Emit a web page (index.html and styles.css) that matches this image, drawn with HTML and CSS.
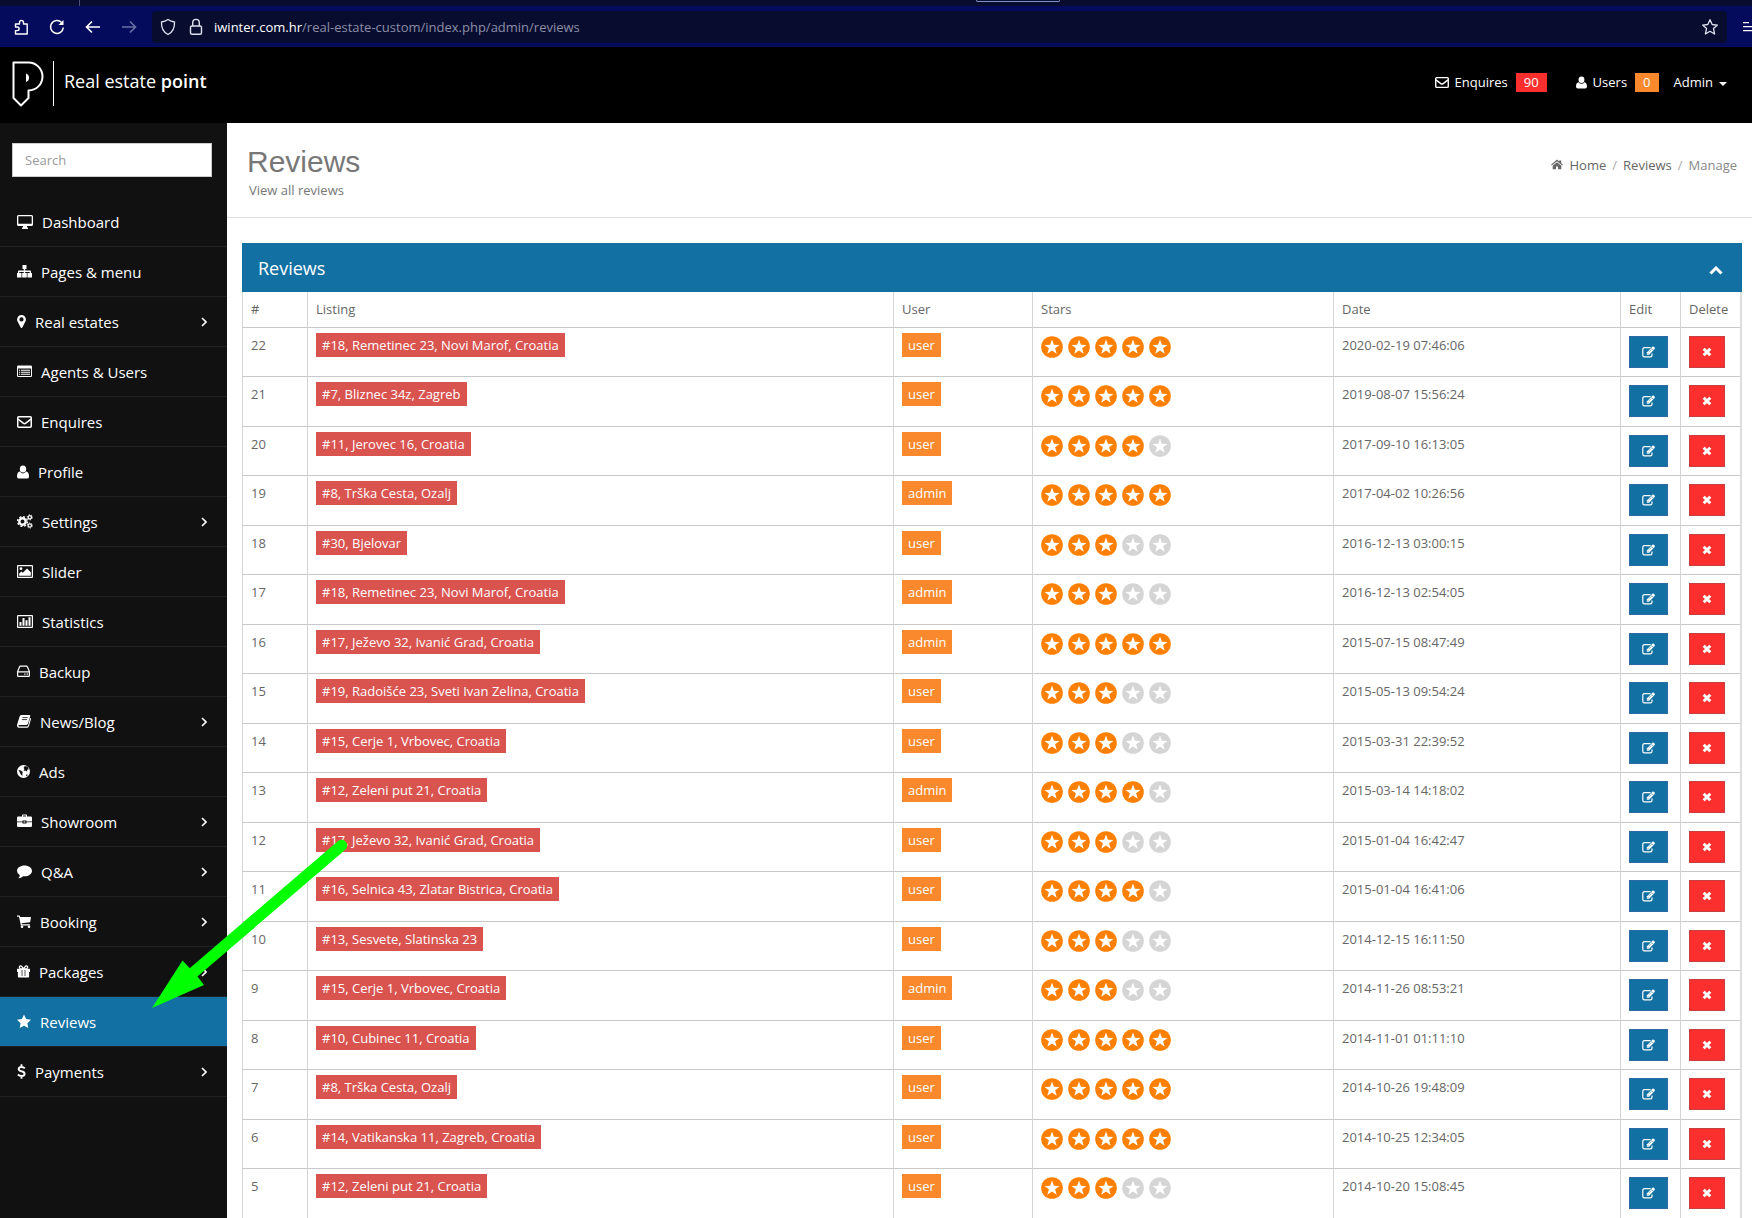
FILE: index.html
```
<!DOCTYPE html>
<html lang="en">
<head>
    <meta charset="UTF-8">
    <meta name="viewport" content="width=device-width, initial-scale=1.0">
    <title>Reviews - Real estate point</title>
    <link rel="stylesheet" href="styles.css">
</head>
<body>
    <!-- shared icons -->
    <svg class="sprite" aria-hidden="true">
        <symbol id="i-envelope" viewBox="0 0 15 14">
            <rect x="0.75" y="1.75" width="13.5" height="10.5" rx="1" fill="none" stroke="currentColor" stroke-width="1.5"/>
            <path d="M1 4.2l5.2 4q1.3 1 2.6 0l5.2-4" fill="none" stroke="currentColor" stroke-width="1.5"/>
        </symbol>
        <symbol id="i-user" viewBox="0 0 12 14">
            <ellipse cx="6" cy="4" rx="3.2" ry="3.6"/>
            <path d="M2.8 6.6Q0 7.2 0 11.4 0 13.6 2 13.6h8q2 0 2-2.2 0-4.2-2.8-4.8Q8 8.4 6 8.4T2.8 6.6z"/>
        </symbol>
        <symbol id="i-right" viewBox="0 0 6 10">
            <path d="M1 1l4 4-4 4" fill="none" stroke="currentColor" stroke-width="1.6"/>
        </symbol>
        <symbol id="i-star" viewBox="0 0 22 22">
            <circle cx="11" cy="11" r="10.8"/>
            <path d="M11 3.4l1.9 5.3 5.6.2-4.4 3.4 1.6 5.4-4.7-3.2-4.7 3.2 1.6-5.4-4.4-3.4 5.6-.2z" fill="#fff"/>
        </symbol>
        <symbol id="i-edit" viewBox="0 0 13 12">
            <path d="M8.6 1.7H2.4Q.8 1.7.8 3.3v6q0 1.6 1.6 1.6h6q1.6 0 1.6-1.6V7.4" fill="none" stroke="currentColor" stroke-width="1.2"/>
            <path d="M4.8 8.7V6.4L10.4.8q.7-.6 1.4 0l.8.8q.6.7 0 1.4L7.1 8.7z"/>
            <path d="M5.6 7.1l.8.8M9.5 2.3L11.2 4M7 5.7l2.3-2.3" stroke="#1270a2" stroke-width=".6"/>
        </symbol>
        <symbol id="i-remove" viewBox="0 0 10 10">
            <path d="M1.7 1.7l6.6 6.6M8.3 1.7L1.7 8.3" stroke="currentColor" stroke-width="3"/>
        </symbol>
    </svg>

    <div class="browser">
        <div class="tabs">
            <span class="tab-line"></span>
            <span class="tab"></span>
        </div>
        <div class="toolbar">
            <button class="tool" aria-label="Extensions">
                <svg width="16" height="16" viewBox="0 0 16 16" fill="none" stroke="currentColor" stroke-width="1.4" stroke-linejoin="round"><path d="M2.5 15h11.7V5H10.500V3.500a2 2 0 0 0-4 0V5H2.500v3h1.800a1.800 1.800 0 0 1 0 3.600H2.500z"/></svg>
            </button>
            <button class="tool" aria-label="Reload">
                <svg width="16" height="16" viewBox="0 0 16 16" fill="none" stroke="currentColor" stroke-width="1.5"><path d="M14.3 8.5A6.400 6.400 0 1 1 12.600 3.600"/><path d="M14.500 1v5H9.500z" fill="currentColor" stroke="none"/></svg>
            </button>
            <button class="tool" aria-label="Back">
                <svg width="16" height="16" viewBox="0 0 16 16" fill="none" stroke="currentColor" stroke-width="1.6"><path d="M15 8H2M7 2.500L1.500 8 7 13.500"/></svg>
            </button>
            <button class="tool tool-off" aria-label="Forward">
                <svg width="16" height="16" viewBox="0 0 16 16" fill="none" stroke="currentColor" stroke-width="1.6"><path d="M1 8h13M9 2.500L14.500 8 9 13.500"/></svg>
            </button>
            <div class="address">
                <svg width="16" height="18" viewBox="0 0 16 18" fill="none" stroke="currentColor" stroke-width="1.3"><path d="M8 1.500Q5 3.600 1.500 4 1 13 8 16.500 15 13 14.500 4 11 3.600 8 1.500z"/></svg>
                <svg width="14" height="18" viewBox="0 0 14 18" fill="none" stroke="currentColor" stroke-width="1.4"><rect x="1.500" y="8" width="11" height="8.300" rx="1.500"/><path d="M3.700 8V4.700a3.300 3.300 0 0 1 6.600 0V8"/></svg>
                <p class="url"><span class="host">iwinter.com.hr</span>/real-estate-custom/index.php/admin/reviews</p>
                <button class="tool" aria-label="Bookmark">
                    <svg width="18" height="18" viewBox="0 0 18 18" fill="none" stroke="currentColor" stroke-width="1.3" stroke-linejoin="round"><path d="M9 1.700l2.200 4.800 5.200.6-3.900 3.500 1.100 5.400L9 13.300 4.400 16l1.100-5.400L1.600 7.100l5.200-.6z"/></svg>
                </button>
            </div>
            <button class="tool menu" aria-label="Menu">
                <svg width="16" height="12" viewBox="0 0 16 12" stroke="currentColor" stroke-width="1.3"><path d="M0 1.700h6M0 5.700h16M0 9.700h16"/></svg>
            </button>
        </div>
    </div>

    <header class="header">
        <a href="#" class="brand">
            <svg class="logo" width="32" height="46" viewBox="0 0 32 46" fill="none" stroke="#fff" stroke-width="2" stroke-linejoin="round"><path d="M1.500 1.500H16.500A13.800 13.800 0 0 1 16.500 29.500V37L9 44.500 1.500 37z"/><path d="M14 12.500v8.500A4.500 4.500 0 0 0 14 12.500z" fill="#fff" stroke="none"/></svg>
            <span class="brand-text">Real estate <strong>point</strong></span>
        </a>
        <nav class="top-nav">
            <a href="#"><svg width="14" height="13"><use href="#i-envelope"/></svg> Enquires <span class="badge red">90</span></a>
            <a href="#" class="top-users"><svg width="11" height="13"><use href="#i-user"/></svg> Users <span class="badge orange">0</span></a>
            <a href="#" class="top-admin">Admin <span class="caret"></span></a>
        </nav>
    </header>

    <div class="page">
        <aside class="sidebar">
            <form class="search">
                <input type="text" placeholder="Search" aria-label="Search">
            </form>
            <ul class="menu-list">
                <li><a href="#"><svg width="16" height="15" viewBox="0 -1 16 15"><path d="M1.500 0h13Q16 0 16 1.500v8q0 1.500-1.500 1.500H10v1.500h1V14H5v-1.500h1V11H1.500Q0 11 0 9.500v-8Q0 0 1.500 0zM1.300 1.300v7.400h13.400V1.300z" fill-rule="evenodd"/></svg>Dashboard</a></li>
                <li><a href="#"><svg width="15" height="15"><path d="M5.500 1h4v4H8.200v1.600h4.900q.9 0 .9.900V9H15v4.500h-4.500V9h2.200V7.900H8.200V9h1.600v4.500H5.200V9h1.600V7.900H2.300V9h2.200v4.500H0V9h1V7.500q0-.9.900-.9h4.900V5H5.500z"/></svg>Pages &amp; menu</a></li>
                <li><a href="#"><svg width="9" height="15"><path d="M4.500 1A4.400 4.400 0 0 1 8.900 5.400Q8.900 6.600 8.400 7.500L5.300 13.400q-.8 1-1.600 0L.6 7.500Q.1 6.600.1 5.400A4.400 4.400 0 0 1 4.500 1zm0 2.300a2.100 2.100 0 1 0 0 4.200 2.100 2.100 0 0 0 0-4.200z" fill-rule="evenodd"/></svg>Real estates<svg class="arrow" width="6" height="10"><use href="#i-right"/></svg></a></li>
                <li><a href="#"><svg width="15" height="15"><path d="M1.200 1.500h12.600q1.200 0 1.200 1.200v9.100q0 1.200-1.200 1.200H1.200Q0 13 0 11.800V2.700Q0 1.500 1.200 1.500zM1 4.500v7.400h13V4.500z" fill-rule="evenodd"/><path d="M2 6.300h1.200M4 6.300h9M2 8.300h1.200M4 8.300h9M2 10.300h1.200M4 10.300h9" stroke="currentColor" stroke-width="1.1"/></svg>Agents &amp; Users</a></li>
                <li><a href="#"><svg width="15" height="14"><use href="#i-envelope"/></svg>Enquires</a></li>
                <li><a href="#"><svg width="12" height="14"><use href="#i-user"/></svg>Profile</a></li>
                <li><a href="#"><svg width="16" height="15" fill="none" stroke="currentColor"><circle cx="5.500" cy="7.500" r="3.200" stroke-width="2.400"/><circle cx="5.500" cy="7.500" r="4.900" stroke-width="1.400" stroke-dasharray="2 1.850"/><circle cx="12.800" cy="3.300" r="1.700" stroke-width="1.300"/><circle cx="12.800" cy="3.300" r="2.600" stroke-width=".9" stroke-dasharray="1.200 1.520"/><circle cx="12.800" cy="11.500" r="1.700" stroke-width="1.300"/><circle cx="12.800" cy="11.500" r="2.600" stroke-width=".9" stroke-dasharray="1.200 1.520"/></svg>Settings<svg class="arrow" width="6" height="10"><use href="#i-right"/></svg></a></li>
                <li><a href="#"><svg width="16" height="15"><path d="M1 1h14q1 0 1 1v11q0 1-1 1H1q-1 0-1-1V2q0-1 1-1zm.2 1.200v10.600h13.600V2.200z" fill-rule="evenodd"/><circle cx="4" cy="4.700" r="1.400"/><path d="M2.200 11.800V9.600l2.200-2.200 1.400 1.400L10 4.600l3.800 3.600v3.600z"/></svg>Slider</a></li>
                <li><a href="#"><svg width="16" height="15"><path d="M1 1h14q1 0 1 1v11q0 1-1 1H1q-1 0-1-1V2q0-1 1-1zm.2 1.200v10.600h13.600V2.200z" fill-rule="evenodd"/><path d="M2.500 8h2v3.800h-2zM5.500 4h2v7.800h-2zM8.500 6.300h2v5.500h-2zM11.500 3.300h2v8.500h-2z"/></svg>Statistics</a></li>
                <li><a href="#"><svg width="13" height="15" fill="none" stroke="currentColor" stroke-width="1.2"><path d="M.6 7.600L2.500 3q.3-.8 1.100-.8h5.800q.8 0 1.100.8l1.900 4.600v3.900q0 .9-.9.900H1.500q-.9 0-.9-.9zM.6 7.800h11.800"/><path d="M7.200 10.100h1.300M9.700 10.100H11"/></svg>Backup</a></li>
                <li><a href="#"><svg width="14" height="15"><path d="M4.500 1h7.800q1.200 0 .9 1.200L11 9.600q-.4 1.400-1.600 1.400H2.200q-.9 0-.9.600 0 .8.900.8h7.900q.7 0 1-.9l2.100-7.600q1.100.4.700 1.600l-2 6.700q-.5 1.500-2 1.500H2Q.1 13.700 0 11.800q-.1-.8.300-1.700L2.700 2.300Q3.200 1 4.500 1z"/><path d="M5.400 3.600h5.300M4.800 5.600h5.300" stroke="#111" stroke-width=".8"/></svg>News/Blog<svg class="arrow" width="6" height="10"><use href="#i-right"/></svg></a></li>
                <li><a href="#"><svg width="13" height="15"><circle cx="6.500" cy="7.500" r="6.500"/><path d="M7.500 2.200l3 .3 1.300 2.800-1.300.3-.8 1.900-1.500-1-1.700.4.900-1.900-.8-1.100zM1.500 6l2.300.4 2 1.500-.5 1.300.3 2.600L4 10.700 3 8.700zM9 10.500l2 .2-1.700 1.800z" fill="#111"/></svg>Ads</a></li>
                <li><a href="#"><svg width="15" height="15"><path d="M5 2.500V1.300Q5 .5 5.800.5h3.400q.8 0 .8.800v1.200h3.800Q15 2.500 15 3.700V7.500H9.500V6.600h-4v.9H0V3.700Q0 2.500 1.200 2.500zm1.100 0h2.800v-.9H6.100zM0 8.300h5.500v1.200h4V8.300H15v3.500q0 1.200-1.200 1.200H1.200Q0 13 0 11.800zM6.600 7.400h1.800v1.200H6.600z"/></svg>Showroom<svg class="arrow" width="6" height="10"><use href="#i-right"/></svg></a></li>
                <li><a href="#"><svg width="15" height="15"><path d="M7.500 1.500C11.600 1.500 15 3.900 15 6.900s-3.400 5.400-7.500 5.400l-1.300-.1Q4.200 14 1.200 14.200q1.500-1.200 1.600-3Q0 9.500 0 6.900C0 3.900 3.400 1.500 7.500 1.500z"/></svg>Q&amp;A<svg class="arrow" width="6" height="10"><use href="#i-right"/></svg></a></li>
                <li><a href="#"><svg width="14" height="15"><path d="M0 1.500h2.600l.6 1.500H14l-.9 5.300-8.500 1 .3 1h8v1.200H3.900L2 2.700H0z"/><circle cx="5" cy="12.700" r="1.300"/><circle cx="12" cy="12.700" r="1.300"/></svg>Booking<svg class="arrow" width="6" height="10"><use href="#i-right"/></svg></a></li>
                <li><a href="#"><svg width="13" height="15"><path d="M0 4.800h13v3.300H0zM.9 8.100h11.200v4.600q0 .8-.8.800H1.700q-.8 0-.8-.8z"/><path d="M6.500 4.800L4.900 2.600Q4 1.500 3 2.100q-1.300 1 0 2.300.5.400 3.500.4l1.600-2.200q.9-1.100 1.900-.5 1.300 1 0 2.300-.5.400-3.500.4" fill="none" stroke="currentColor" stroke-width="1.3"/><path d="M5 6v6M8 6v6" stroke="#111" stroke-width=".7"/></svg>Packages<svg class="arrow" width="6" height="10"><use href="#i-right"/></svg></a></li>
                <li class="active"><a href="#"><svg width="14" height="15"><path d="M7 .6l2.100 4.500 4.900.7-3.600 3.400.9 4.900L7 11.700l-4.300 2.400.9-4.900L0 5.800l4.900-.7z"/></svg>Reviews</a></li>
                <li><a href="#"><svg width="9" height="15" fill="none" stroke="currentColor" stroke-width="1.9"><path d="M7.800 4.300Q6.500 3 4.500 3 1.700 3 1.700 5q0 1.500 2.800 2.300Q7.600 8 7.600 9.900q0 2.100-3.100 2.100Q2.400 12 .9 10.500M4.500.3V3M4.500 12v2.700"/></svg>Payments<svg class="arrow" width="6" height="10"><use href="#i-right"/></svg></a></li>
            </ul>
        </aside>

        <main class="main">
            <div class="page-head">
                <div>
                    <h1>Reviews</h1>
                    <p>View all reviews</p>
                </div>
                <nav class="breadcrumb">
                    <a href="#"><svg width="12" height="11" viewBox="0 0 13 12"><path d="M6.500.6L8.900 2.700V1.500h2.200v3L13 6.200l-.8 1L6.500 2.500.8 7.200 0 6.200zM6.500 3.500l4.700 3.800v3.900H7.600V8.200H5.400v3H1.800V7.300z"/></svg>Home</a>
                    <span class="sep">/</span>
                    <a href="#">Reviews</a>
                    <span class="sep">/</span>
                    <span class="current">Manage</span>
                </nav>
            </div>

            <section class="panel">
                <div class="panel-head">
                    <h2>Reviews</h2>
                    <button class="collapse" aria-label="Collapse">
                        <svg width="14" height="9" viewBox="0 0 14 9"><path d="M1.500 7.500L7 2l5.500 5.500" fill="none" stroke="currentColor" stroke-width="3"/></svg>
                    </button>
                </div>
                <table class="reviews">
                    <thead>
                        <tr>
                            <th class="col-id">#</th>
                            <th>Listing</th>
                            <th class="col-user">User</th>
                            <th class="col-stars">Stars</th>
                            <th class="col-date">Date</th>
                            <th class="col-edit">Edit</th>
                            <th class="col-delete">Delete</th>
                        </tr>
                    </thead>
                    <tbody id="reviewRows"></tbody>
                </table>
            </section>
        </main>
    </div>

    <!-- pointer to the Reviews menu item -->
    <svg class="pointer" width="200" height="172" viewBox="0 0 200 172" fill="none" aria-hidden="true">
        <path d="M42 134L189.500 7.500" stroke="#0f0" stroke-width="11.500" stroke-linecap="round"/>
        <path d="M0 170L30.500 122.500 38 130.500 45.500 138.500 52 147z" fill="#0f0"/>
    </svg>

    <script src="script.js"></script>
</body>
</html>
```

FILE: styles.css
```
* {
    margin: 0;
    padding: 0;
    box-sizing: border-box;
}

body {
    font-family: 'Open Sans', 'Noto Sans', sans-serif;
    font-size: 13px;
    line-height: 18px;
    color: #666;
    background-color: #fff;
    display: flex;
    flex-direction: column;
    min-height: 100vh;
    overflow-x: hidden;
}

a {
    color: inherit;
    text-decoration: none;
}

button {
    border: none;
    background: none;
    color: inherit;
    cursor: pointer;
}

svg {
    flex-shrink: 0;
}

svg:not([fill]) {
    fill: currentColor;
}

.sprite {
    display: none;
}

/* Browser bar */
.tabs {
    display: flex;
    height: 6px;
    background-color: #080d30;
}

.tab-line {
    width: 1px;
    margin-left: 79px;
    background-color: #4a4e78;
}

.tab {
    width: 84px;
    height: 2px;
    margin-left: 896px;
    border: 1px solid #7f95c8;
    border-top: none;
    border-radius: 0 0 3px 3px;
}

.toolbar {
    display: flex;
    align-items: center;
    height: 41px;
    padding-left: 13px;
    background-color: #040b5c;
    color: #fff;
    overflow: hidden;
}

.tool {
    display: flex;
    margin-right: 20px;
}

.tool-off {
    margin-right: 15px;
    color: #6b70a5;
}

.address {
    flex: 1;
    display: flex;
    align-items: center;
    height: 32px;
    padding: 0 8px;
    border-radius: 4px;
    background-color: #080d30;
    color: #dfe1f0;
}

.address svg + svg {
    margin-left: 13px;
}

.address .tool {
    margin-right: 0;
}

.url {
    flex: 1;
    margin-left: 11px;
    color: #8b8ea6;
}

.host {
    color: #fff;
}

.menu {
    margin-right: -7px;
    margin-left: 16px;
}

/* Header */
.header {
    display: flex;
    justify-content: space-between;
    align-items: center;
    height: 76px;
    padding: 0 25px 3px 12px;
    background-color: #000;
    color: #fff;
}

.brand {
    display: flex;
    align-items: center;
}

.brand-text {
    margin-left: 9px;
    padding: 0 0 4px 10px;
    border-left: 1px solid #fff;
    font-size: 18px;
    line-height: 41px;
}

.brand-text strong {
    font-weight: 600;
}

.top-nav,
.top-nav a {
    display: flex;
    align-items: center;
}

.top-nav {
    padding-bottom: 3px;
}

.top-nav svg {
    margin-right: 6px;
}

.badge {
    margin-left: 8px;
    padding: 0 8px;
    line-height: 19px;
}

.red {
    background-color: #fc2f2f;
}

.orange {
    background-color: #f9892c;
}

.top-users {
    margin-left: 29px;
}

.top-admin {
    margin-left: 15px;
}

.caret {
    margin: 3px 0 0 6px;
    border: 4px solid transparent;
    border-top-color: #fff;
    border-bottom: none;
}

/* Sidebar */
.page {
    flex: 1;
    display: flex;
}

.sidebar {
    width: 227px;
    flex-shrink: 0;
    padding-top: 20px;
    background-color: #111;
    color: #fff;
}

.search {
    padding: 0 15px 20px 12px;
}

.search input {
    width: 100%;
    height: 34px;
    padding: 0 12px;
    border: 1px solid #ccc;
    font-family: inherit;
    font-size: 13px;
}

.search input::placeholder {
    color: #999;
}

.menu-list {
    list-style: none;
}

.menu-list li {
    border-bottom: 1px solid #222;
}

.menu-list a {
    display: flex;
    align-items: center;
    gap: 9px;
    height: 49px;
    padding: 0 20px 0 17px;
    font-size: 15px;
}

.menu-list .active {
    background-color: #1270a2;
}

.menu-list .arrow {
    margin-left: auto;
}

/* Content */
.main {
    flex: 1;
    min-width: 0;
}

.page-head {
    display: flex;
    justify-content: space-between;
    align-items: flex-start;
    height: 95px;
    padding: 21px 15px 0 20px;
    border-bottom: 1px solid #ddd;
}

.page-head h1 {
    font-family: 'Liberation Sans', Arial, sans-serif;
    font-size: 30px;
    font-weight: normal;
    line-height: 36px;
    color: #777;
}

.page-head p {
    margin-top: 1px;
    padding-left: 2px;
    color: #777;
}

.breadcrumb {
    display: flex;
    align-items: center;
    gap: 6px;
    margin-top: 12px;
}

.breadcrumb svg {
    margin-right: 7px;
}

.sep {
    color: #aaa;
}

.current {
    color: #888;
}

.panel {
    margin: 25px 10px 0 15px;
}

.panel-head {
    display: flex;
    justify-content: space-between;
    align-items: center;
    height: 49px;
    padding: 0 19px 0 16px;
    background-color: #1270a2;
    color: #fff;
}

.panel-head h2 {
    font-size: 18px;
    font-weight: normal;
}

.collapse {
    display: flex;
    margin-top: 5px;
}

.reviews {
    width: 100%;
    table-layout: fixed;
    border-collapse: separate;
    border-spacing: 0;
    border-right: 2px solid #ddd;
}

.reviews th,
.reviews td {
    padding: 8px;
    border-left: 1px solid #d5d5d5;
    border-bottom: 1px solid #c9c9c9;
    font-weight: normal;
    text-align: left;
    vertical-align: top;
}

.reviews thead tr {
    height: 36px;
}

.reviews tbody tr {
    height: 49px;
}

.reviews tbody tr:nth-child(even) {
    height: 50px;
}

.reviews tbody tr:last-child td {
    border-bottom: none;
}

.col-id {
    width: 65px;
}

.col-user {
    width: 139px;
}

.col-stars {
    width: 301px;
}

.col-date {
    width: 287px;
}

.col-edit,
.col-delete {
    width: 60px;
}

.label {
    padding: 3px 6px;
    color: #fff;
}

.label.listing {
    background-color: #d9534f;
}

.stars {
    display: flex;
    gap: 5px;
    color: #d5d5d5;
}

.stars .on {
    color: #ff7f00;
}

.btn {
    display: flex;
    justify-content: center;
    align-items: center;
    height: 32px;
    color: #fff;
}

.btn-edit {
    width: 39px;
    background-color: #1270a2;
    border: 1px solid #2a6ba5;
}

.btn-delete {
    width: 36px;
    background-color: #fc2f2f;
    border: 1px solid #c64040;
}

.pointer {
    position: absolute;
    left: 152px;
    top: 838px;
    pointer-events: none;
}
```

FILE: script.js
```
const reviews = [
    [22, '#18, Remetinec 23, Novi Marof, Croatia', 'user', 5, '2020-02-19 07:46:06'],
    [21, '#7, Bliznec 34z, Zagreb', 'user', 5, '2019-08-07 15:56:24'],
    [20, '#11, Jerovec 16, Croatia', 'user', 4, '2017-09-10 16:13:05'],
    [19, '#8, Trška Cesta, Ozalj', 'admin', 5, '2017-04-02 10:26:56'],
    [18, '#30, Bjelovar', 'user', 3, '2016-12-13 03:00:15'],
    [17, '#18, Remetinec 23, Novi Marof, Croatia', 'admin', 3, '2016-12-13 02:54:05'],
    [16, '#17, Ježevo 32, Ivanić Grad, Croatia', 'admin', 5, '2015-07-15 08:47:49'],
    [15, '#19, Radoišće 23, Sveti Ivan Zelina, Croatia', 'user', 3, '2015-05-13 09:54:24'],
    [14, '#15, Cerje 1, Vrbovec, Croatia', 'user', 3, '2015-03-31 22:39:52'],
    [13, '#12, Zeleni put 21, Croatia', 'admin', 4, '2015-03-14 14:18:02'],
    [12, '#17, Ježevo 32, Ivanić Grad, Croatia', 'user', 3, '2015-01-04 16:42:47'],
    [11, '#16, Selnica 43, Zlatar Bistrica, Croatia', 'user', 4, '2015-01-04 16:41:06'],
    [10, '#13, Sesvete, Slatinska 23', 'user', 3, '2014-12-15 16:11:50'],
    [9, '#15, Cerje 1, Vrbovec, Croatia', 'admin', 3, '2014-11-26 08:53:21'],
    [8, '#10, Cubinec 11, Croatia', 'user', 5, '2014-11-01 01:11:10'],
    [7, '#8, Trška Cesta, Ozalj', 'user', 5, '2014-10-26 19:48:09'],
    [6, '#14, Vatikanska 11, Zagreb, Croatia', 'user', 5, '2014-10-25 12:34:05'],
    [5, '#12, Zeleni put 21, Croatia', 'user', 3, '2014-10-20 15:08:45']
];

function getStars(count) {
    let html = '';
    for (let i = 1; i <= 5; i++) {
        html += `<svg class="${i <= count ? 'on' : 'off'}" width="22" height="22"><use href="#i-star"/></svg>`;
    }
    return html;
}

document.getElementById('reviewRows').innerHTML = reviews.map(([id, listing, user, stars, date]) => `
    <tr>
        <td>${id}</td>
        <td><span class="label listing">${listing}</span></td>
        <td><span class="label orange">${user}</span></td>
        <td><div class="stars">${getStars(stars)}</div></td>
        <td>${date}</td>
        <td><button class="btn btn-edit" aria-label="Edit review ${id}"><svg width="13" height="12"><use href="#i-edit"/></svg></button></td>
        <td><button class="btn btn-delete" aria-label="Delete review ${id}"><svg width="10" height="10"><use href="#i-remove"/></svg></button></td>
    </tr>
`).join('');
```
